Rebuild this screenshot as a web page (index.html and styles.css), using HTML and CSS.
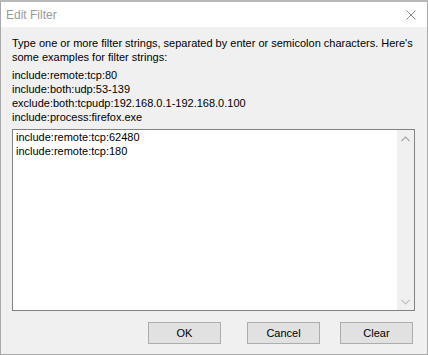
FILE: index.html
```html
<!DOCTYPE html>
<html>
<head>
<meta charset="utf-8">
<link rel="stylesheet" href="styles.css">
</head>
<body>
<div class="window">
  <div class="titlebar">
    <span class="title">Edit Filter</span>
    <svg class="close" width="10" height="10" viewBox="0 0 10 10"><path d="M0.5 0.5L9.5 9.5M9.5 0.5L0.5 9.5" stroke="#8a8a8a" stroke-width="1" fill="none"/></svg>
  </div>
  <div class="content">
    <p class="intro">Type one or more filter strings, separated by enter or semicolon characters. Here's some examples for filter strings:</p>
    <div class="examples">
      <div>include:remote:tcp:80</div>
      <div>include:both:udp:53-139</div>
      <div>exclude:both:tcpudp:192.168.0.1-192.168.0.100</div>
      <div>include:process:firefox.exe</div>
    </div>
    <div class="editor">
      <div class="editor-text">
        <div>include:remote:tcp:62480</div>
        <div>include:remote:tcp:180</div>
      </div>
      <div class="scrollbar">
        <div class="arrow">
          <svg width="9" height="6" viewBox="0 0 9 6"><path d="M0.5 5L4.5 1L8.5 5" stroke="#a6a6a6" stroke-width="1.2" fill="none"/></svg>
        </div>
        <div class="track"></div>
        <div class="arrow">
          <svg width="9" height="6" viewBox="0 0 9 6"><path d="M0.5 1L4.5 5L8.5 1" stroke="#c2c2c2" stroke-width="1.2" fill="none"/></svg>
        </div>
      </div>
    </div>
    <div class="buttons">
      <button class="btn btn-ok">OK</button>
      <button class="btn btn-cancel">Cancel</button>
      <button class="btn">Clear</button>
    </div>
  </div>
</div>
</body>
</html>
```
FILE: styles.css
```css
html, body {
  margin: 0;
  padding: 0;
  background: #f0f0f0;
}
.window {
  width: 428px;
  height: 355px;
  box-sizing: border-box;
  border: 1px solid #a9a9a9;
  border-top: 2px solid #b8b8b8;
  background: #f0f0f0;
  display: flex;
  flex-direction: column;
  font-family: "Liberation Sans", Arial, sans-serif;
  font-size: 11px;
  color: #000;
}
.titlebar {
  height: 25px;
  background: #fff;
  display: flex;
  align-items: center;
  justify-content: space-between;
  padding: 0 11px 0 5px;
}
.title {
  font-family: "Liberation Sans", Arial, sans-serif;
  font-size: 12px;
  color: #9a9a9a;
}
.close {
  display: block;
}
.content {
  flex: 1;
  padding: 9px 12px 0 11px;
  display: flex;
  flex-direction: column;
}
.intro {
  margin: 0;
  line-height: 14px;
}
.examples {
  margin-top: 4px;
  line-height: 14px;
}
.editor {
  margin-top: 5px;
  height: 182px;
  box-sizing: border-box;
  border: 1px solid #828282;
  background: #fff;
  display: flex;
}
.editor-text {
  flex: 1;
  padding: 0 3px;
  line-height: 14px;
}
.scrollbar {
  width: 17px;
  background: #f0f0f0;
  display: flex;
  flex-direction: column;
}
.arrow {
  height: 17px;
  display: flex;
  align-items: center;
  justify-content: center;
}
.track {
  flex: 1;
}
.buttons {
  margin-top: 11px;
  display: flex;
  justify-content: flex-end;
  padding-right: 2px;
}
.btn {
  width: 73px;
  height: 22px;
  box-sizing: border-box;
  border: 1px solid #adadad;
  background: #e1e1e1;
  font-family: "Liberation Sans", Arial, sans-serif;
  font-size: 11px;
  color: #000;
  padding: 0;
  margin: 0;
}
.btn-ok {
  margin-right: 26px;
}
.btn-cancel {
  margin-right: 20px;
}
```
